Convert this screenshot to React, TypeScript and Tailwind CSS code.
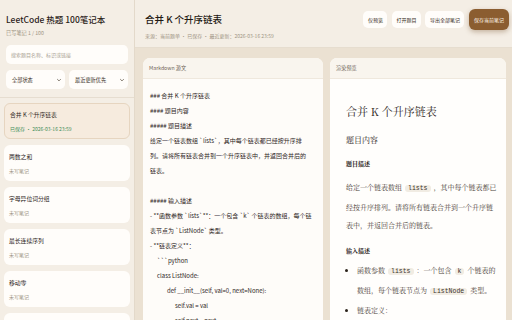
import React from 'react';

const sans = { fontFamily: '"Noto Sans CJK SC", "Noto Sans", sans-serif' };

const problems = [
  { title: '合并 K 个升序链表', meta: '已保存 · 2026-03-16 23:59', active: true },
  { title: '两数之和', meta: '未写笔记' },
  { title: '字母异位词分组', meta: '未写笔记' },
  { title: '最长连续序列', meta: '未写笔记' },
  { title: '移动零', meta: '未写笔记' },
  { title: '盛最多水的容器', meta: '未写笔记' },
];

const mdLines: { text: string; indent?: number }[] = [
  { text: '### 合并 K 个升序链表' },
  { text: '#### 题目内容' },
  { text: '##### 题目描述' },
  { text: '给定一个链表数组 `lists`，其中每个链表都已经按升序排' },
  { text: '列。请将所有链表合并到一个升序链表中，并返回合并后的' },
  { text: '链表。' },
  { text: ' ' },
  { text: '##### 输入描述' },
  { text: '- **函数参数 `lists`**：一个包含 `k` 个链表的数组，每个链' },
  { text: '表节点为 `ListNode` 类型。' },
  { text: '- **链表定义**：' },
  { text: '```python', indent: 1 },
  { text: 'class ListNode:', indent: 1 },
  { text: 'def __init__(self, val=0, next=None):', indent: 2 },
  { text: 'self.val = val', indent: 3 },
  { text: 'self.next = next', indent: 3 },
];

const Code: React.FC<{ children: React.ReactNode }> = ({ children }) => (
  <code className="mx-[3px] rounded-[3px] bg-[#f1ece3] px-[3px] font-['Liberation_Mono',monospace] text-[6.5px] text-[#3a3128]">
    {children}
  </code>
);

const Chevron = () => (
  <svg width="6" height="6" viewBox="0 0 10 10" fill="none" stroke="#6f6558" strokeWidth="1.4">
    <path d="M2 3.5 L5 6.5 L8 3.5" />
  </svg>
);

export default function App() {
  return (
    <div className="flex h-[320px] w-[512px] overflow-hidden bg-[#ebe1d2] text-[#2e261d]" style={sans}>
      {/* sidebar */}
      <aside className="flex w-[135px] shrink-0 flex-col border-r border-[#e3d9ca] bg-[#f4eee5]">
        <div className="px-[6px] pt-[13px]">
          <h1 className="text-[8.5px] leading-[12px] font-medium text-[#2a2118]">LeetCode 热题 100笔记本</h1>
          <p className="mt-[4px] text-[5.2px] leading-[8px] text-[#a09584]">已写笔记 1 / 100</p>
          <div className="mt-[8px] flex h-[19px] items-center rounded-[5px] bg-[#fffdfa] px-[5px] text-[5px] text-[#a99f91]">
            搜索题目名称、标识或链接
          </div>
          <div className="mt-[6px] flex gap-[4px]">
            <div className="flex h-[19px] flex-1 items-center justify-between rounded-[5px] bg-[#fffdfa] pl-[6px] pr-[3px] text-[5.2px] text-[#3a3128]">
              全部状态 <Chevron />
            </div>
            <div className="flex h-[19px] flex-1 items-center justify-between rounded-[5px] bg-[#fffdfa] pl-[6px] pr-[3px] text-[5.2px] text-[#3a3128]">
              最近更新优先 <Chevron />
            </div>
          </div>
        </div>
        <div className="mt-[8px] border-t border-[#e6ddd0]" />
        <div className="flex flex-col gap-[6px] px-[4px] pt-[5px]">
          {problems.map((p) => (
            <div
              key={p.title}
              className={`flex h-[36px] flex-col justify-center gap-[6px] rounded-[6px] px-[5px] ${
                p.active ? 'border border-[#e6d5c0] bg-[#f6ebde]' : 'bg-[#fffdfa]'
              }`}
            >
              <div className="text-[5.8px] leading-[8px] text-[#2e261d]">{p.title}</div>
              <div className={`text-[5px] leading-[7px] ${p.active ? 'text-[#3f8b57]' : 'text-[#a09584]'}`}>{p.meta}</div>
            </div>
          ))}
        </div>
      </aside>

      {/* main */}
      <main className="flex min-w-0 flex-1 flex-col">
        <header className="flex h-[48px] shrink-0 items-start justify-between border-b border-[#e6ddcf] bg-[#f4eee5] pl-[10px] pr-[3px] pt-[9px]">
          <div className="pt-[4px]">
            <h2 className="text-[9.5px] leading-[13px] font-medium text-[#1f1913]">合并 K 个升序链表</h2>
            <p className="mt-[6px] text-[5px] leading-[7px] text-[#a09584]">来源：当前题单 · 已保存 · 最近更新：2026-03-16 23:59</p>
          </div>
          <div className="flex items-center gap-[4.5px]">
            <button className="h-[17px] rounded-[5px] bg-[#fffdfa] px-[4.5px] text-[5px] text-[#3a3128]">仅预览</button>
            <button className="h-[17px] rounded-[5px] bg-[#fffdfa] px-[4.5px] text-[5px] text-[#3a3128]">打开题目</button>
            <button className="h-[17px] rounded-[5px] bg-[#fffdfa] px-[4.5px] text-[5px] text-[#3a3128]">导出全部笔记</button>
            <button className="h-[21px] rounded-[6px] bg-[#8b5d30] px-[5px] text-[5px] text-[#fbf3e6] shadow-[0_2px_5px_rgba(110,70,30,0.35)]">保存当前笔记</button>
          </div>
        </header>

        <div className="flex min-h-0 flex-1 gap-[7px] pl-[8px] pr-[6px] pt-[10px]">
          {/* markdown source */}
          <section className="flex w-[180px] shrink-0 flex-col overflow-hidden rounded-t-[7px] bg-[#fefcf9]">
            <div className="flex h-[21px] shrink-0 items-center border-b border-[#efe8dd] bg-[#f9f5ee] px-[6px] text-[5.2px] text-[#6f6558]">
              Markdown 源文
            </div>
            <div className="px-[7px] pt-[9px] text-[6px] text-[#2e261d]">
              {mdLines.map((l, i) => (
                <div
                  key={i}
                  className={`h-[15px] whitespace-pre leading-[15px] ${
                    l.indent === 1 ? 'pl-[7px]' : l.indent === 2 ? 'pl-[17px]' : l.indent === 3 ? 'pl-[25px]' : ''
                  }`}
                >
                  {l.text}
                </div>
              ))}
            </div>
          </section>

          {/* preview */}
          <section
            className="flex min-w-0 flex-1 flex-col overflow-hidden rounded-t-[7px] bg-[#fffefc]"
            style={{ fontFamily: '"Noto Serif CJK SC", "Liberation Serif", "Noto Sans CJK SC", serif' }}
          >
            <div className="flex h-[21px] shrink-0 items-center border-b border-[#efe8dd] bg-[#f9f5ee] px-[6px] text-[5.2px] text-[#6f6558]" style={sans}>
              渲染预览
            </div>
            <div className="pl-[16px] pr-[7px] pt-[25px] text-[#2a2219]">
              <h3 className="text-[11px] leading-[14px]">合并 K 个升序链表</h3>
              <h4 className="mt-[17px] text-[8px] leading-[10px]">题目内容</h4>
              <h5 className="mt-[15px] text-[6px] leading-[8px] font-bold">题目描述</h5>
              <p className="mt-[10px] text-[7px] leading-[18px] text-[#4a4036]">
                给定一个链表数组<Code>lists</Code>，其中每个链表都已经按升序排列。请将所有链表合并到一个升序链表中，并返回合并后的链表。
              </p>
              <h5 className="mt-[13px] text-[6px] leading-[8px] font-bold">输入描述</h5>
              <ul className="mt-[6px] list-disc pl-[11px] text-[7px] leading-[18px] text-[#4a4036] marker:text-[#2a2219]">
                <li>
                  函数参数<Code>lists</Code>：一个包含<Code>k</Code>个链表的数组，每个链表节点为<Code>ListNode</Code>类型。
                </li>
                <li>链表定义：</li>
              </ul>
            </div>
          </section>
        </div>
      </main>
    </div>
  );
}
